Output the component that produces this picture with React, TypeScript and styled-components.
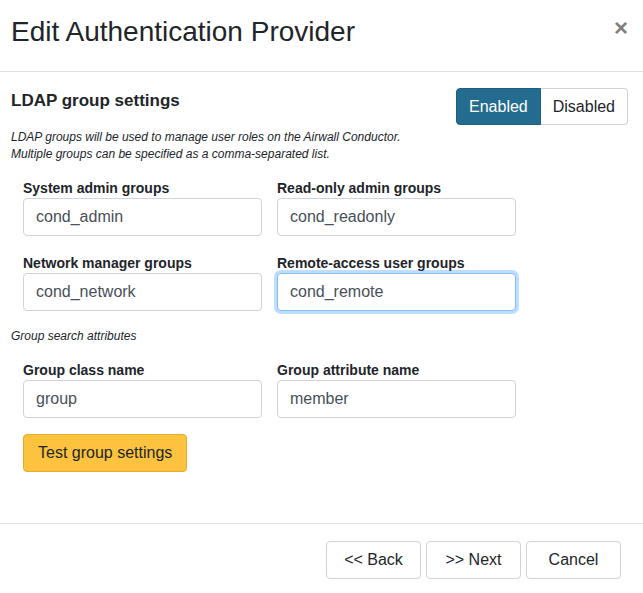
import React from "react";
import styled, { createGlobalStyle } from "styled-components";

const Global = createGlobalStyle`
  html, body { margin: 0; padding: 0; background: #fff; }
  body { font-family: "Liberation Sans", Arial, sans-serif; color: #212529; }
  * { box-sizing: border-box; }
`;

const Modal = styled.div`
  width: 643px;
  height: 593px;
  display: flex;
  flex-direction: column;
  background: #fff;
`;

const Header = styled.div`
  display: flex;
  justify-content: space-between;
  align-items: flex-start;
  padding: 12px 15px 20px 11px;
  border-bottom: 1px solid #dee2e6;
`;

const Title = styled.h4`
  margin: 0;
  font-size: 28px;
  line-height: 39px;
  font-weight: 400;
  color: #212529;
`;

const Close = styled.button`
  border: 0;
  background: transparent;
  padding: 0;
  margin-top: 4px;
  font-family: "Liberation Sans", Arial, sans-serif;
  font-size: 24px;
  font-weight: 700;
  line-height: 1;
  color: #000;
  opacity: 0.5;
`;

const Body = styled.div`
  padding: 16px 15px 51px 11px;
  flex: 1;
`;

const HeadRow = styled.div`
  display: flex;
  justify-content: space-between;
  align-items: flex-start;
`;

const SectionTitle = styled.h5`
  margin: 1px 0 0 0;
  font-size: 17px;
  line-height: 24px;
  font-weight: 700;
`;

const Toggle = styled.div`
  display: flex;
`;

const ToggleBtn = styled.button<{ $active?: boolean; $first?: boolean }>`
  height: 37px;
  padding: 0 12px;
  font-family: "Liberation Sans", Arial, sans-serif;
  font-size: 16px;
  border: 1px solid ${(p) => (p.$active ? "#1d5f80" : "#ced4da")};
  background: ${(p) => (p.$active ? "#236b8f" : "#fff")};
  color: ${(p) => (p.$active ? "#fff" : "#212529")};
  border-radius: ${(p) => (p.$first ? "4px 0 0 4px" : "0 4px 4px 0")};
  ${(p) => (p.$first ? "" : "border-left: 0;")}
`;

const Help = styled.p<{ $mt: number }>`
  margin: ${(p) => p.$mt}px 0 0 0;
  font-size: 12px;
  line-height: 17px;
  font-style: italic;
  color: #212529;
`;

const Grid = styled.div<{ $mt: number }>`
  margin: ${(p) => p.$mt}px 0 0 12px;
  display: grid;
  grid-template-columns: 239px 239px;
  column-gap: 15px;
  row-gap: 17px;
`;

const Field = styled.div`
  display: flex;
  flex-direction: column;
`;

const Label = styled.label`
  font-size: 14px;
  line-height: 20px;
  font-weight: 700;
  color: #212529;
`;

const Input = styled.input<{ $focus?: boolean }>`
  height: 38px;
  width: 100%;
  padding: 0 12px;
  font-family: "Liberation Sans", Arial, sans-serif;
  font-size: 16px;
  color: #495057;
  background: #fff;
  border: 1px solid ${(p) => (p.$focus ? "#80bdff" : "#ced4da")};
  border-radius: 4px;
  outline: none;
  ${(p) => (p.$focus ? "box-shadow: 0 0 0 3px rgba(0, 123, 255, 0.25);" : "")}
`;

const TestButton = styled.button`
  margin: 16px 0 0 12px;
  height: 38px;
  padding: 0 14px;
  font-family: "Liberation Sans", Arial, sans-serif;
  font-size: 16px;
  color: #212529;
  background: #fdc33e;
  border: 1px solid #e9ab2a;
  border-radius: 4px;
`;

const Footer = styled.div`
  border-top: 1px solid #dee2e6;
  padding: 17px 22px 14px 0;
  display: flex;
  justify-content: flex-end;
  gap: 5px;
`;

const FooterButton = styled.button`
  height: 38px;
  min-width: 95px;
  padding: 0 12px;
  font-family: "Liberation Sans", Arial, sans-serif;
  font-size: 16px;
  color: #212529;
  background: #fff;
  border: 1px solid #ced4da;
  border-radius: 4px;
`;

export default function App() {
  return (
    <Modal>
      <Global />
      <Header>
        <Title>Edit Authentication Provider</Title>
        <Close aria-label="Close">×</Close>
      </Header>
      <Body>
        <HeadRow>
          <SectionTitle>LDAP group settings</SectionTitle>
          <Toggle>
            <ToggleBtn $active $first>Enabled</ToggleBtn>
            <ToggleBtn>Disabled</ToggleBtn>
          </Toggle>
        </HeadRow>
        <Help $mt={4}>
          LDAP groups will be used to manage user roles on the Airwall Conductor.
          <br />
          Multiple groups can be specified as a comma-separated list.
        </Help>
        <Grid $mt={15}>
          <Field>
            <Label>System admin groups</Label>
            <Input defaultValue="cond_admin" />
          </Field>
          <Field>
            <Label>Read-only admin groups</Label>
            <Input defaultValue="cond_readonly" />
          </Field>
          <Field>
            <Label>Network manager groups</Label>
            <Input defaultValue="cond_network" />
          </Field>
          <Field>
            <Label>Remote-access user groups</Label>
            <Input defaultValue="cond_remote" $focus />
          </Field>
        </Grid>
        <Help $mt={17}>Group search attributes</Help>
        <Grid $mt={15}>
          <Field>
            <Label>Group class name</Label>
            <Input defaultValue="group" />
          </Field>
          <Field>
            <Label>Group attribute name</Label>
            <Input defaultValue="member" />
          </Field>
        </Grid>
        <TestButton>Test group settings</TestButton>
      </Body>
      <Footer>
        <FooterButton>&lt;&lt; Back</FooterButton>
        <FooterButton>&gt;&gt; Next</FooterButton>
        <FooterButton>Cancel</FooterButton>
      </Footer>
    </Modal>
  );
}
